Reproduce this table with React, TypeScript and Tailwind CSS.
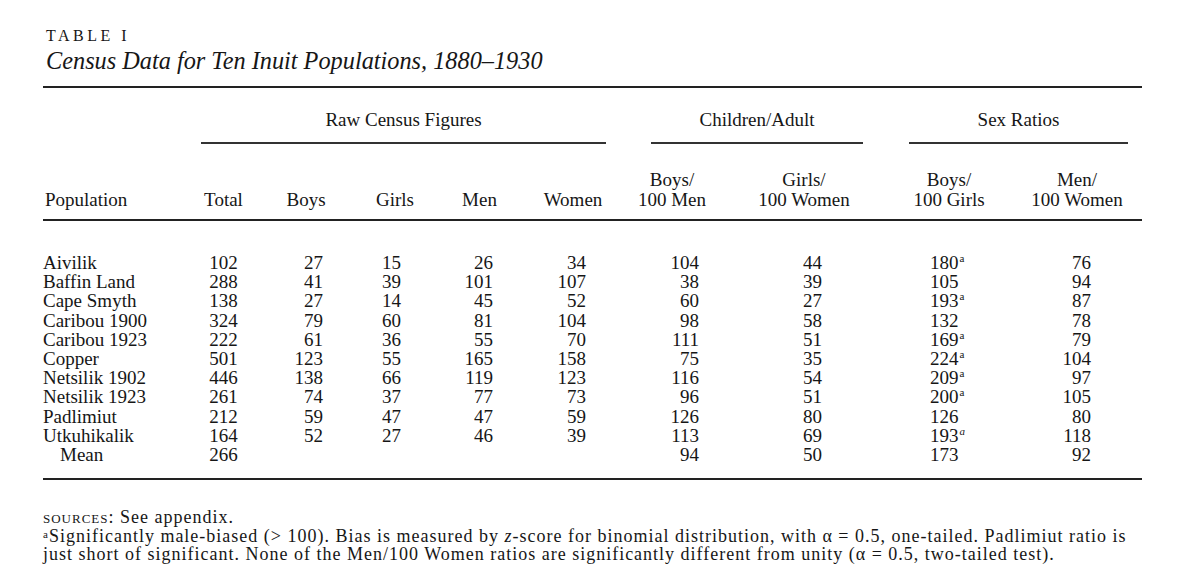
import * as React from 'react';

type Row = {
  name: string;
  total: string;
  boys?: string;
  girls?: string;
  men?: string;
  women?: string;
  boysMen: string;
  girlsWomen: string;
  boysGirls: string;
  sig?: 'a' | 'ai';
  menWomen: string;
  indent?: boolean;
};

const rows: Row[] = [
  { name: 'Aivilik', total: '102', boys: '27', girls: '15', men: '26', women: '34', boysMen: '104', girlsWomen: '44', boysGirls: '180', sig: 'a', menWomen: '76' },
  { name: 'Baffin Land', total: '288', boys: '41', girls: '39', men: '101', women: '107', boysMen: '38', girlsWomen: '39', boysGirls: '105', menWomen: '94' },
  { name: 'Cape Smyth', total: '138', boys: '27', girls: '14', men: '45', women: '52', boysMen: '60', girlsWomen: '27', boysGirls: '193', sig: 'a', menWomen: '87' },
  { name: 'Caribou 1900', total: '324', boys: '79', girls: '60', men: '81', women: '104', boysMen: '98', girlsWomen: '58', boysGirls: '132', menWomen: '78' },
  { name: 'Caribou 1923', total: '222', boys: '61', girls: '36', men: '55', women: '70', boysMen: '111', girlsWomen: '51', boysGirls: '169', sig: 'a', menWomen: '79' },
  { name: 'Copper', total: '501', boys: '123', girls: '55', men: '165', women: '158', boysMen: '75', girlsWomen: '35', boysGirls: '224', sig: 'a', menWomen: '104' },
  { name: 'Netsilik 1902', total: '446', boys: '138', girls: '66', men: '119', women: '123', boysMen: '116', girlsWomen: '54', boysGirls: '209', sig: 'a', menWomen: '97' },
  { name: 'Netsilik 1923', total: '261', boys: '74', girls: '37', men: '77', women: '73', boysMen: '96', girlsWomen: '51', boysGirls: '200', sig: 'a', menWomen: '105' },
  { name: 'Padlimiut', total: '212', boys: '59', girls: '47', men: '47', women: '59', boysMen: '126', girlsWomen: '80', boysGirls: '126', menWomen: '80' },
  { name: 'Utkuhikalik', total: '164', boys: '52', girls: '27', men: '46', women: '39', boysMen: '113', girlsWomen: '69', boysGirls: '193', sig: 'ai', menWomen: '118' },
  { name: 'Mean', total: '266', boysMen: '94', girlsWomen: '50', boysGirls: '173', menWomen: '92', indent: true },
];

// column widths measured off the scan
const grid = 'grid grid-cols-[147px_67px_98px_80px_89px_98px_100px_164px_126px_130px]';

const Sup = ({ italic }: { italic?: boolean }) => (
  <span className={`relative -top-[7px] ml-[1px] text-[11px] leading-none ${italic ? 'italic' : ''}`}>a</span>
);

export default function App() {
  return (
    <div className="min-h-[585px] bg-white text-[#161616] font-['Liberation_Serif','Times_New_Roman',serif]">
      <div className="ml-[43px] w-[1099px] pt-[27px]">
        <div className="pl-[3px] text-[16px] leading-[18px] tracking-[3.5px] uppercase">Table I</div>
        <div className="pl-[3px] mt-[2px] text-[24.3px] leading-[28px] italic">
          Census Data for Ten Inuit Populations, 1880–1930
        </div>

        <div className="mt-[11px] border-t-2 border-[#222]" />

        <div className={`${grid} pt-[22px] text-[19px] leading-[20px]`}>
          <div />
          <div className="col-span-5 px-[11px] pr-[16px]">
            <div className="text-center">Raw Census Figures</div>
            <div className="mt-[12px] border-t-2 border-[#333]" />
          </div>
          <div className="col-span-2 pl-[29px] pr-[23px]">
            <div className="text-center">Children/Adult</div>
            <div className="mt-[12px] border-t-2 border-[#333]" />
          </div>
          <div className="col-span-2 pl-[23px] pr-[14px]">
            <div className="text-center">Sex Ratios</div>
            <div className="mt-[12px] border-t-2 border-[#333]" />
          </div>
        </div>

        <div className={`${grid} items-end pt-[26px] pb-[9px] text-[19px] leading-[20px]`}>
          <div className="pl-[2px]">Population</div>
          <div className="text-center">Total</div>
          <div className="text-center">Boys</div>
          <div className="text-center">Girls</div>
          <div className="text-center">Men</div>
          <div className="text-center">Women</div>
          <div className="text-center">Boys/<br />100 Men</div>
          <div className="text-center">Girls/<br />100 Women</div>
          <div className="text-center">Boys/<br />100 Girls</div>
          <div className="text-center">Men/<br />100 Women</div>
        </div>

        <div className="border-t-2 border-[#222]" />

        <div className="pt-[32px] pb-[14px] text-[19px] leading-[19px]">
          {rows.map((r) => (
            <div key={r.name} className={`${grid} h-[19.2px]`}>
              <div className={r.indent ? 'pl-[17px]' : ''}>{r.name}</div>
              <div className="text-center">{r.total}</div>
              <div className="text-right pr-[32px]">{r.boys}</div>
              <div className="text-right pr-[34px]">{r.girls}</div>
              <div className="text-right pr-[31px]">{r.men}</div>
              <div className="text-right pr-[36px]">{r.women}</div>
              <div className="text-right pr-[23px]">{r.boysMen}</div>
              <div className="pl-[81px]">{r.girlsWomen}</div>
              <div className="pl-[44px]">
                {r.boysGirls}
                {r.sig && <Sup italic={r.sig === 'ai'} />}
              </div>
              <div className="text-right pr-[51px]">{r.menWomen}</div>
            </div>
          ))}
        </div>

        <div className="border-t-2 border-[#222]" />

        <div className="pt-[28px] text-[18px] leading-[18.5px] tracking-[1px]">
          <div>
            <span className="[font-variant:small-caps]">sources</span>: See appendix.
          </div>
          <div>
            <span className="relative -top-[4px] text-[11px] leading-none">a</span>Significantly male-biased (&gt; 100).
            Bias is measured by <span className="italic">z</span>-score for binomial distribution, with α = 0.5,
            one-tailed. Padlimiut ratio is
            <br />
            just short of significant. None of the Men/100 Women ratios are significantly different from unity (α =
            0.5, two-tailed test).
          </div>
        </div>
      </div>
    </div>
  );
}
